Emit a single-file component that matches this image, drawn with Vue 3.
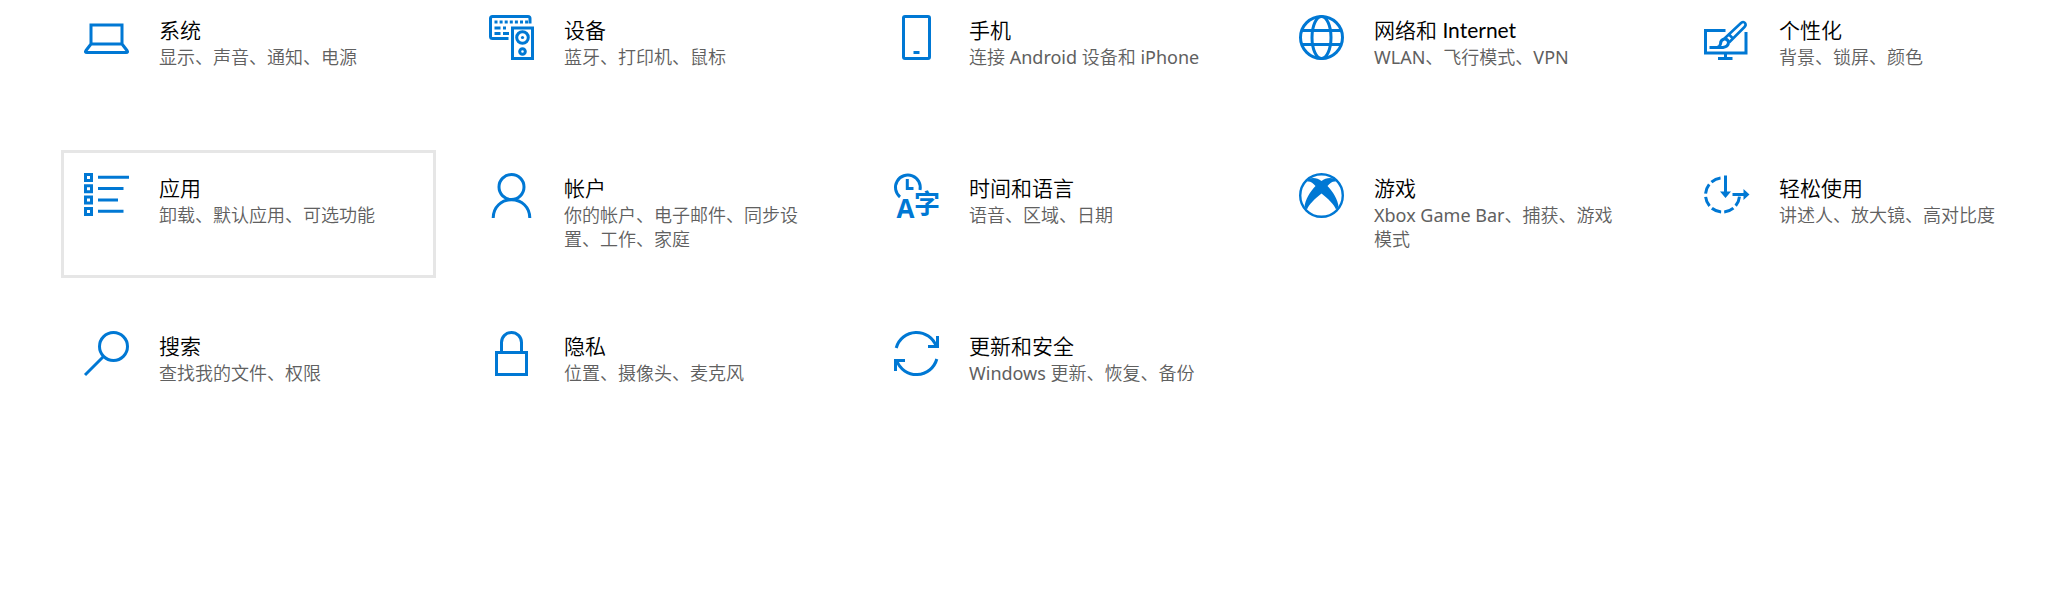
<template>
  <main class="settings">
    <nav class="tiles">
      <button
        v-for="item in categories"
        :key="item.id"
        type="button"
        class="tile"
        :class="{ active: item.id === current }"
        @click="current = item.id"
      >
        <svg class="icon" viewBox="0 0 45 45" aria-hidden="true">
          <template v-if="item.id === 'system'">
            <path d="M7 29V10h31v19zM7 29L2 35.500Q0.500 37.500 3 37.500H42Q44.500 37.500 43 35.500L38 29" />
          </template>

          <template v-else-if="item.id === 'devices'">
            <path d="M19.500 23.500H3.500Q1.500 23.500 1.500 21.500V3.500Q1.500 1.500 3.500 1.500H39Q41 1.500 41 3.500V8.500" />
            <path d="M5.500 7H39" stroke-dasharray="3 2.100" />
            <path d="M5.500 13h6M14 13h3M5.500 18.500h6M14 18.500h6" />
            <path d="M23.500 13h20v30.500h-20z" />
            <circle cx="33.500" cy="22.500" r="5.800" />
            <circle cx="33.500" cy="22.500" r="1.600" class="solid" />
            <circle cx="33.500" cy="36.500" r="2.800" />
          </template>

          <template v-else-if="item.id === 'phone'">
            <rect x="9.500" y="1.500" width="26" height="42" rx="1.500" />
            <path d="M19.500 37.500h6" />
          </template>

          <template v-else-if="item.id === 'network'">
            <circle cx="22.500" cy="22.500" r="21" />
            <ellipse cx="22.500" cy="22.500" rx="9.500" ry="21" />
            <path d="M3 15.500h39M3 29.500h39" />
          </template>

          <template v-else-if="item.id === 'personalization'">
            <path d="M21.500 15.500H1.500V38H42V17M21.500 38v6M14 43.500h14.500" />
            <path d="M5.500 32.500H19Q24.500 31.500 24.500 27Q23.500 23.500 20 24Q16.500 25 16.500 29Q16 31.500 13.500 32.500" />
            <path d="M20.500 23.500L37 8Q39.500 6 41 8Q42.500 10 40.500 12L25 27.500M25 19.500l4.500 4.500" stroke-width="2.600" />
          </template>

          <template v-else-if="item.id === 'apps'">
            <path d="M1.500 1.500h6v6h-6zM1.500 12.800h6v6h-6zM1.500 24.100h6v6h-6zM1.500 35.400h6v6h-6z" />
            <path d="M14 4.200h31M14 15.500h25.500M14 27h20M14 38.200h25.500" />
          </template>

          <template v-else-if="item.id === 'accounts'">
            <circle cx="22.500" cy="14" r="12.500" />
            <path d="M4.200 45C4.200 34 12.500 26.700 22.500 26.700S40.800 34 40.800 45" />
          </template>

          <template v-else-if="item.id === 'time'">
            <path d="M6 24A12.400 12.400 0 1 1 26 17" />
            <path d="M13.300 6v9.500H19.500" />
            <text x="2.500" y="45" class="latin">A</text>
            <text x="20" y="39.500" class="hanzi">字</text>
          </template>

          <template v-else-if="item.id === 'gaming'">
            <circle cx="22.500" cy="22.500" r="21.300" stroke-width="2.400" />
            <path
              class="solid"
              d="M10 6C14 4 19 5.500 22.500 8C26 5.500 31 4 35 6L37 8.500C33.500 8 31 10 28.500 13C34 19 39 26.500 39.500 34L37 36.500C35.500 32 29 25.500 22.500 20.500C16 25.500 9.500 32 8 36.500L5.500 34C6 26.500 11 19 16.500 13C14 10 11.500 8 8 8.500z"
            />
          </template>

          <template v-else-if="item.id === 'ease'">
            <path d="M17.500 5A17 17 0 1 0 35.500 23" stroke-dasharray="10 3.200" stroke-dashoffset="-1" />
            <path d="M21.500 2.500V20M28.500 21.500H41" />
            <path class="solid" d="M16 18.500h11l-5.500 6.500zM39.500 16l6 5.500-6 5.500z" />
          </template>

          <template v-else-if="item.id === 'search'">
            <circle cx="29.500" cy="15.500" r="14" />
            <path d="M19.500 25.500L1 44" />
          </template>

          <template v-else-if="item.id === 'privacy'">
            <path d="M7.500 21.500h30v22h-30zM12.500 21V11.500a10 10 0 0 1 20 0V21" />
          </template>

          <template v-else-if="item.id === 'update'">
            <path d="M2.200 17A21 21 0 0 1 42.300 15.500M43.500 5v10.500H34" />
            <path d="M42.800 28A21 21 0 0 1 2.700 29.500M1.500 40V29.500H11" />
          </template>
        </svg>

        <span class="text">
          <span class="title">{{ item.title }}</span>
          <span class="desc">{{ item.desc }}</span>
        </span>
      </button>
    </nav>
  </main>
</template>

<script setup>
import { ref } from 'vue'

const current = ref('apps')

const categories = [
  { id: 'system', title: '系统', desc: '显示、声音、通知、电源' },
  { id: 'devices', title: '设备', desc: '蓝牙、打印机、鼠标' },
  { id: 'phone', title: '手机', desc: '连接 Android 设备和 iPhone' },
  { id: 'network', title: '网络和 Internet', desc: 'WLAN、飞行模式、VPN' },
  { id: 'personalization', title: '个性化', desc: '背景、锁屏、颜色' },
  { id: 'apps', title: '应用', desc: '卸载、默认应用、可选功能' },
  { id: 'accounts', title: '帐户', desc: '你的帐户、电子邮件、同步设置、工作、家庭' },
  { id: 'time', title: '时间和语言', desc: '语音、区域、日期' },
  { id: 'gaming', title: '游戏', desc: 'Xbox Game Bar、捕获、游戏模式' },
  { id: 'ease', title: '轻松使用', desc: '讲述人、放大镜、高对比度' },
  { id: 'search', title: '搜索', desc: '查找我的文件、权限' },
  { id: 'privacy', title: '隐私', desc: '位置、摄像头、麦克风' },
  { id: 'update', title: '更新和安全', desc: 'Windows 更新、恢复、备份' }
]
</script>

<style>
body {
  margin: 0;
  background: #fff;
}
</style>

<style scoped>
.settings {
  overflow: hidden;
}

/* the list is scrolled a little past its top edge */
.tiles {
  display: grid;
  grid-template-columns: repeat(auto-fill, minmax(340px, 1fr));
  gap: 30px;
  margin-top: -8px;
  padding: 0 1px 30px 61px;
}

.tile {
  display: flex;
  align-items: flex-start;
  gap: 30px;
  min-height: 128px;
  padding: 20px 28px 20px 20px;
  border: 3px solid transparent;
  background: transparent;
  color: #000;
  font-family: 'Noto Sans', 'Noto Sans CJK SC DemiLight', 'Noto Sans CJK SC', sans-serif;
  text-align: left;
  cursor: pointer;
}

.tile.active,
.tile:hover {
  border-color: #e6e6e6;
}

.icon {
  flex: none;
  width: 45px;
  height: 45px;
  overflow: visible;
  fill: none;
  stroke: #0078d4;
  stroke-width: 3;
}

.icon .solid {
  fill: #0078d4;
  stroke: none;
}

.icon text {
  fill: #0078d4;
  stroke: none;
  font-family: 'Open Sans', 'Noto Sans CJK SC', sans-serif;
  font-size: 26px;
  font-weight: 700;
}

.text {
  display: flex;
  flex-direction: column;
  flex: 1;
  min-width: 0;
}

.title {
  font-family: Lato, 'Noto Sans CJK SC DemiLight', 'Noto Sans CJK SC', sans-serif;
  font-size: 21px;
  line-height: 30px;
}

.desc {
  color: #606060;
  font-size: 18px;
  line-height: 24px;
}
</style>
